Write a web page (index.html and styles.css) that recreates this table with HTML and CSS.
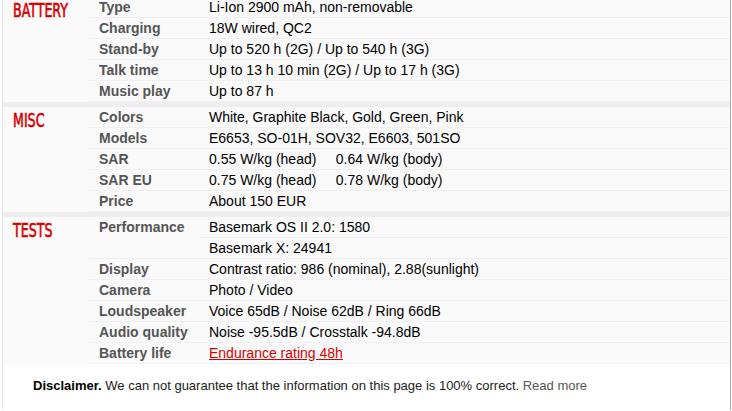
FILE: index.html
```html
<!DOCTYPE html>
<html>
<head>
<meta charset="utf-8">
<link rel="stylesheet" href="styles.css">
</head>
<body>
<div class="specs">
  <table class="section">
    <colgroup><col class="c-head"><col class="c-ttl"><col></colgroup>
    <tr><th rowspan="5"><span class="head">BATTERY</span></th><td class="ttl">Type</td><td class="nfo">Li-Ion 2900 mAh, non-removable</td></tr>
    <tr><td class="ttl">Charging</td><td class="nfo">18W wired, QC2</td></tr>
    <tr><td class="ttl">Stand-by</td><td class="nfo">Up to 520 h (2G) / Up to 540 h (3G)</td></tr>
    <tr><td class="ttl">Talk time</td><td class="nfo">Up to 13 h 10 min (2G) / Up to 17 h (3G)</td></tr>
    <tr><td class="ttl">Music play</td><td class="nfo">Up to 87 h</td></tr>
  </table>
  <table class="section">
    <colgroup><col class="c-head"><col class="c-ttl"><col></colgroup>
    <tr><th rowspan="5"><span class="head">MISC</span></th><td class="ttl">Colors</td><td class="nfo">White, Graphite Black, Gold, Green, Pink</td></tr>
    <tr><td class="ttl">Models</td><td class="nfo">E6653, SO-01H, SOV32, E6603, 501SO</td></tr>
    <tr><td class="ttl">SAR</td><td class="nfo">0.55 W/kg (head)&nbsp;&nbsp;&nbsp;&nbsp; 0.64 W/kg (body)</td></tr>
    <tr><td class="ttl">SAR EU</td><td class="nfo">0.75 W/kg (head)&nbsp;&nbsp;&nbsp;&nbsp; 0.78 W/kg (body)</td></tr>
    <tr><td class="ttl">Price</td><td class="nfo">About 150 EUR</td></tr>
  </table>
  <table class="section">
    <colgroup><col class="c-head"><col class="c-ttl"><col></colgroup>
    <tr><th rowspan="7"><span class="head">TESTS</span></th><td class="ttl" rowspan="2">Performance</td><td class="nfo">Basemark OS II 2.0: 1580</td></tr>
    <tr><td class="nfo">Basemark X: 24941</td></tr>
    <tr><td class="ttl">Display</td><td class="nfo">Contrast ratio: 986 (nominal), 2.88(sunlight)</td></tr>
    <tr><td class="ttl">Camera</td><td class="nfo">Photo / Video</td></tr>
    <tr><td class="ttl">Loudspeaker</td><td class="nfo">Voice 65dB / Noise 62dB / Ring 66dB</td></tr>
    <tr><td class="ttl">Audio quality</td><td class="nfo">Noise -95.5dB / Crosstalk -94.8dB</td></tr>
    <tr><td class="ttl">Battery life</td><td class="nfo"><a class="red-link" href="#">Endurance rating 48h</a></td></tr>
  </table>
  <p class="disclaimer"><strong>Disclaimer.</strong> We can not guarantee that the information on this page is 100% correct. <a class="more" href="#">Read more</a></p>
</div>
</body>
</html>
```
FILE: styles.css
```css
html, body {
  margin: 0;
  padding: 0;
  background: #fff;
}
body {
  font-family: "Liberation Sans", Arial, sans-serif;
  font-size: 14px;
  color: #000;
  overflow: hidden;
}
.specs {
  margin: -3px 0 0 2px;
  width: 727px;
  border-left: 1px solid #e8e8e8;
  background: #fafafa;
  box-shadow: 1px 1px 0 #a8a8a8;
}
.section {
  width: 100%;
  table-layout: fixed;
  border-collapse: collapse;
  border-spacing: 0;
}
.c-head { width: 86px; }
.c-ttl { width: 110px; }
.section + .section {
  border-top: 5px solid #eeeeee;
}
.section th {
  padding: 2px 0 0 10px;
  vertical-align: top;
  text-align: left;
  font-weight: normal;
  overflow: visible;
}
.head {
  display: inline-block;
  font-family: "Liberation Sans Narrow", "DejaVu Sans Condensed", sans-serif;
  font-weight: normal;
  font-size: 19.5px;
  line-height: 24px;
  color: #d50000;
  -webkit-text-stroke: 0.6px #d50000;
  transform: scaleX(0.72);
  transform-origin: left center;
  white-space: nowrap;
}
.ttl, .nfo {
  padding: 0 0 0 10px;
  height: 20px;
  line-height: 20px;
  vertical-align: top;
  border-bottom: 1px solid #f0f0f0;
  white-space: nowrap;
}
.ttl {
  font-weight: bold;
  color: #555;
}
.nfo {
  color: #000;
}
.red-link {
  color: #d50000;
  text-decoration: underline;
}
.disclaimer {
  margin: 0;
  padding: 12px 30px 14px;
  font-size: 13px;
  line-height: 20px;
  background: #fff;
  color: #222;
}
.disclaimer strong {
  color: #000;
}
.more {
  color: #555;
  text-decoration: none;
}
```
